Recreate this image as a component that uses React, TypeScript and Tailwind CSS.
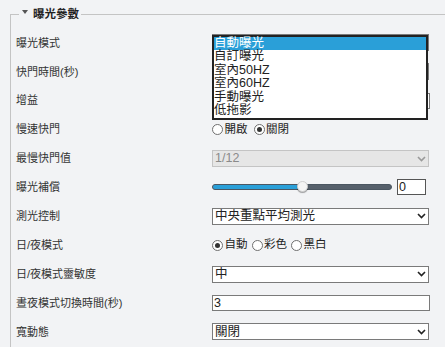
import React from "react";

const font = { fontFamily: '"Liberation Sans", "Noto Sans CJK TC", sans-serif' };

const Chevron = ({ color = "#222" }: { color?: string }) => (
  <svg width="9" height="6" viewBox="0 0 9 6" className="mr-[2px]">
    <path d="M1 1 L4.5 4.5 L8 1" fill="none" stroke={color} strokeWidth="1.6" />
  </svg>
);

const Select = ({ value, disabled = false }: { value: string; disabled?: boolean }) => (
  <div
    className={`w-[217px] h-[17px] flex items-center justify-between pl-[2px] border text-[12.5px] leading-none ${
      disabled ? "bg-[#e6e6e6] border-[#c4c4c4] text-[#8a8a8a]" : "bg-white border-[#7a7a7a] text-[#222]"
    }`}
  >
    <span>{value}</span>
    <Chevron color={disabled ? "#9a9a9a" : "#222"} />
  </div>
);

const Input = ({ value }: { value: string }) => (
  <div className="w-[218px] h-[16px] flex items-center pl-[1px] bg-white border border-[#7a7a7a] text-[12.5px] leading-none text-[#222]">
    {value}
  </div>
);

const Radio = ({ label, checked = false }: { label: string; checked?: boolean }) => (
  <label className="flex items-center gap-[1.5px]">
    <span className="w-[11px] h-[11px] rounded-full border border-[#6f6f6f] bg-white flex items-center justify-center">
      {checked && <span className="w-[5px] h-[5px] rounded-full bg-[#333]" />}
    </span>
    <span className="text-[11.5px] leading-none text-[#222]">{label}</span>
  </label>
);

const Row = ({ label, children }: { label: string; children?: React.ReactNode }) => (
  <div className="flex items-center h-[28.9px]">
    <div className="w-[196px] text-[11px] text-[#333]">{label}</div>
    {children}
  </div>
);

// open dropdown of 曝光模式
const options = ["自動曝光", "自訂曝光", "室內50HZ", "室內60HZ", "手動曝光", "低拖影"];

export default function App() {
  return (
    <div className="w-[445px] h-[347px] overflow-hidden bg-[#f2f3f5] pt-[6px] pl-[10px]" style={font}>
      <fieldset className="w-[460px] border-t border-l border-[#c4c4c4] pl-[5px] pt-[5.5px] pb-4">
        <legend className="ml-[3px] pl-[3px] pr-[2px] flex items-center gap-[5px] h-[17px]">
          <svg width="6" height="4" viewBox="0 0 6 4" className="-mt-[6px]">
            <path d="M0 0 H6 L3 4 Z" fill="#555" />
          </svg>
          <span className="text-[11.5px] font-bold text-[#222]">曝光參數</span>
        </legend>

        <Row label="曝光模式">
          <div className="relative">
            <Select value="" />
            <div className="absolute top-[0.5px] left-0 w-[216px] border-2 border-[#222] bg-white z-10">
              {options.map((o, i) => (
                <div
                  key={o}
                  className={`h-[13.5px] leading-[13.5px] text-[12.5px] ${
                    i === 0 ? "bg-[#2a9fd8] text-white" : "text-[#222]"
                  }`}
                >
                  {o}
                </div>
              ))}
            </div>
          </div>
        </Row>
        <Row label="快門時間(秒)">
          <Select value="" />
        </Row>
        <Row label="增益">
          <Input value="" />
        </Row>
        <Row label="慢速快門">
          <div className="flex items-center gap-[6px]">
            <Radio label="開啟" />
            <Radio label="關閉" checked />
          </div>
        </Row>
        <Row label="最慢快門值">
          <Select value="1/12" disabled />
        </Row>
        <Row label="曝光補償">
          <div className="flex items-center">
            <div className="relative w-[180px] h-[6px] rounded-full bg-[#56606b] border border-[#4b5661]">
              <div className="h-full w-[89px] rounded-l-full bg-[#2a9fd8]" />
              <div className="absolute left-[84px] top-[-4px] w-[11px] h-[11px] rounded-full bg-[#f4f4f4] border border-[#d0d0d0] shadow-[0_1px_1px_rgba(0,0,0,0.35)]" />
            </div>
            <div className="ml-[5px] w-[29px] h-[16px] flex items-center pl-[1px] bg-white border border-[#555] text-[12.5px] leading-none text-[#222]">
              0
            </div>
          </div>
        </Row>
        <Row label="測光控制">
          <Select value="中央重點平均測光" />
        </Row>
        <Row label="日/夜模式">
          <div className="flex items-center gap-[4px]">
            <Radio label="自動" checked />
            <Radio label="彩色" />
            <Radio label="黑白" />
          </div>
        </Row>
        <Row label="日/夜模式靈敏度">
          <Select value="中" />
        </Row>
        <Row label="晝夜模式切換時間(秒)">
          <Input value="3" />
        </Row>
        <Row label="寬動態">
          <Select value="關閉" />
        </Row>
      </fieldset>
    </div>
  );
}
